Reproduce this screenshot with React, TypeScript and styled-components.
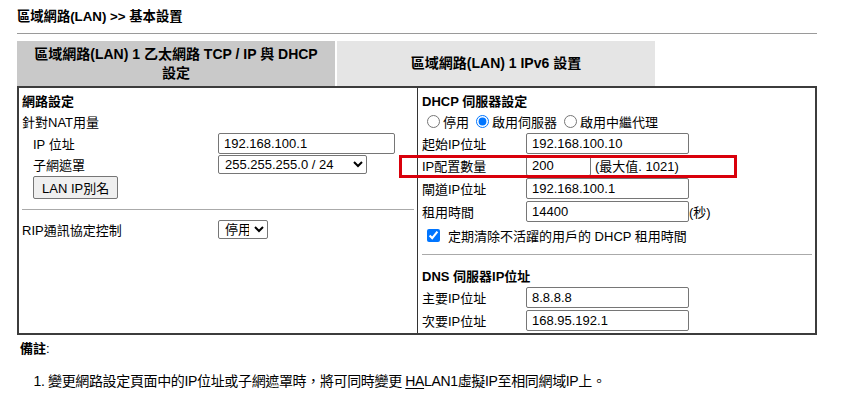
import React from "react";
import styled, { createGlobalStyle } from "styled-components";

const GlobalStyle = createGlobalStyle`
  body {
    margin: 0;
    background: #fff;
    color: #000;
    font-family: "Liberation Sans", "Noto Sans CJK TC", sans-serif;
    font-size: 13px;
  }
`;

const Page = styled.div`
  width: 800px;
  padding: 9px 0 0 17px;
`;

const Title = styled.div`
  font-weight: bold;
  font-size: 13.3px;
  line-height: 16px;
`;

const Rule = styled.div`
  margin-top: 8px;
  border-top: 1px solid #9a9a9a;
`;

const Tabs = styled.div`
  display: flex;
  gap: 2px;
  margin-top: 7px;
`;

const Tab = styled.div<{ $active?: boolean }>`
  width: 318px;
  height: 45px;
  display: flex;
  align-items: center;
  justify-content: center;
  text-align: center;
  padding: 0 16px;
  box-sizing: border-box;
  font-weight: bold;
  font-size: 14px;
  line-height: 19px;
  background: ${(p) => (p.$active ? "#c9c9c9" : "#e5e5e5")};
`;

const Panel = styled.div`
  display: grid;
  grid-template-columns: 398px 1fr;
  height: 249px;
  box-sizing: border-box;
  border: 2px solid #3c3c3c;
`;

const Cell = styled.div<{ $divider?: boolean }>`
  padding: 1px 3px 0 ${(p) => (p.$divider ? "4px" : "3px")};
  border-left: ${(p) => (p.$divider ? "1px solid #333" : "none")};
`;

const Row = styled.div<{ $h?: number; $mt?: number }>`
  position: relative;
  display: flex;
  align-items: center;
  height: ${(p) => p.$h ?? 22}px;
  margin-top: ${(p) => p.$mt ?? 0}px;
  white-space: nowrap;
`;

const Heading = styled.span`
  font-weight: bold;
`;

const Label = styled.span<{ $w: number; $indent?: number }>`
  width: ${(p) => p.$w}px;
  margin-left: ${(p) => p.$indent ?? 0}px;
  flex: none;
`;

const TextBox = styled.input<{ $w: number }>`
  width: ${(p) => p.$w}px;
  height: 21px;
  box-sizing: border-box;
  margin: 0;
  padding: 1px 5px;
  border: 1px solid #767676;
  border-radius: 2px;
  font-family: "Liberation Sans", "Noto Sans CJK TC", sans-serif;
  font-size: 13px;
  color: #000;
`;

const Select = styled.select<{ $w: number }>`
  width: ${(p) => p.$w}px;
  height: 19px;
  margin: 0;
  padding: 0 2px;
  border: 1px solid #767676;
  border-radius: 2px;
  background: #fff;
  font-family: "Liberation Sans", "Noto Sans CJK TC", sans-serif;
  font-size: 13px;
  color: #000;
`;

const Button = styled.button`
  height: 23px;
  margin: 0 0 0 11px;
  padding: 0 8px;
  border: 1px solid #767676;
  border-radius: 2px;
  background: #efefef;
  font-family: "Liberation Sans", "Noto Sans CJK TC", sans-serif;
  font-size: 13px;
  color: #000;
`;

const Divider = styled.div<{ $mt: number }>`
  margin-top: ${(p) => p.$mt}px;
  border-top: 1px solid #aaa;
`;

const Choice = styled.label`
  display: inline-flex;
  align-items: center;
  margin-right: 2px;
  input {
    margin: 0 3px 0 5px;
    width: 13px;
    height: 13px;
  }
`;

const Check = styled.input`
  margin: 0 8px 0 5px;
  width: 13px;
  height: 13px;
  accent-color: #0075ff;
`;

const Note = styled.span`
  margin-left: 4px;
`;

const Highlight = styled.div`
  position: absolute;
  left: -23px;
  top: 1px;
  width: 338px;
  height: 23px;
  box-sizing: border-box;
  border: 3px solid #d9000b;
  pointer-events: none;
`;

const Remarks = styled.div`
  margin-top: 6px;
  padding-left: 3px;
  line-height: 16px;
  font-size: 13px;
`;

const List = styled.ol`
  margin: 16px 0 0;
  padding-left: 28px;
  font-size: 14px;
  letter-spacing: -0.35px;
  u {
    text-underline-offset: 2px;
  }
`;

export default function App() {
  return (
    <>
      <GlobalStyle />
      <Page>
        <Title>區域網路(LAN) &gt;&gt; 基本設置</Title>
        <Rule />
        <Tabs>
          <Tab $active>區域網路(LAN) 1 乙太網路 TCP / IP 與 DHCP 設定</Tab>
          <Tab>區域網路(LAN) 1 IPv6 設置</Tab>
        </Tabs>
        <Panel>
          <Cell>
            <Row>
              <Heading>網路設定</Heading>
            </Row>
            <Row $h={21}>針對NAT用量</Row>
            <Row>
              <Label $w={185} $indent={11}>IP 位址</Label>
              <TextBox $w={177} defaultValue="192.168.100.1" />
            </Row>
            <Row $h={21}>
              <Label $w={185} $indent={11}>子網遮罩</Label>
              <Select $w={149} defaultValue="24">
                <option value="24">255.255.255.0 / 24</option>
              </Select>
            </Row>
            <Row $h={25}>
              <Button>LAN IP別名</Button>
            </Row>
            <Divider $mt={9} />
            <Row $mt={8}>
              <Label $w={196}>RIP通訊協定控制</Label>
              <Select $w={50} defaultValue="off">
                <option value="off">停用</option>
              </Select>
            </Row>
          </Cell>
          <Cell $divider>
            <Row>
              <Heading>DHCP 伺服器設定</Heading>
            </Row>
            <Row $h={21}>
              <Choice>
                <input type="radio" name="dhcp" />
                停用
              </Choice>
              <Choice>
                <input type="radio" name="dhcp" defaultChecked />
                啟用伺服器
              </Choice>
              <Choice>
                <input type="radio" name="dhcp" />
                啟用中繼代理
              </Choice>
            </Row>
            <Row>
              <Label $w={104}>起始IP位址</Label>
              <TextBox $w={163} defaultValue="192.168.100.10" />
            </Row>
            <Row $h={23}>
              <Label $w={104}>IP配置數量</Label>
              <TextBox $w={65} defaultValue="200" />
              <Note>(最大值. 1021)</Note>
              <Highlight />
            </Row>
            <Row $h={23}>
              <Label $w={104}>閘道IP位址</Label>
              <TextBox $w={163} defaultValue="192.168.100.1" />
            </Row>
            <Row $h={23}>
              <Label $w={104}>租用時間</Label>
              <TextBox $w={163} defaultValue="14400" />
              (秒)
            </Row>
            <Row $h={24}>
              <Check type="checkbox" defaultChecked />
              定期清除不活躍的用戶的 DHCP 租用時間
            </Row>
            <Divider $mt={7} />
            <Row $mt={9}>
              <Heading>DNS 伺服器IP位址</Heading>
            </Row>
            <Row $h={23}>
              <Label $w={104}>主要IP位址</Label>
              <TextBox $w={163} defaultValue="8.8.8.8" />
            </Row>
            <Row $h={23}>
              <Label $w={104}>次要IP位址</Label>
              <TextBox $w={163} defaultValue="168.95.192.1" />
            </Row>
          </Cell>
        </Panel>
        <Remarks>
          <Heading>備註</Heading>:
          <List>
            <li>
              變更網路設定頁面中的IP位址或子網遮罩時，將可同時變更 <u>HA</u>LAN1虛擬IP至相同網域IP上。
            </li>
          </List>
        </Remarks>
      </Page>
    </>
  );
}
